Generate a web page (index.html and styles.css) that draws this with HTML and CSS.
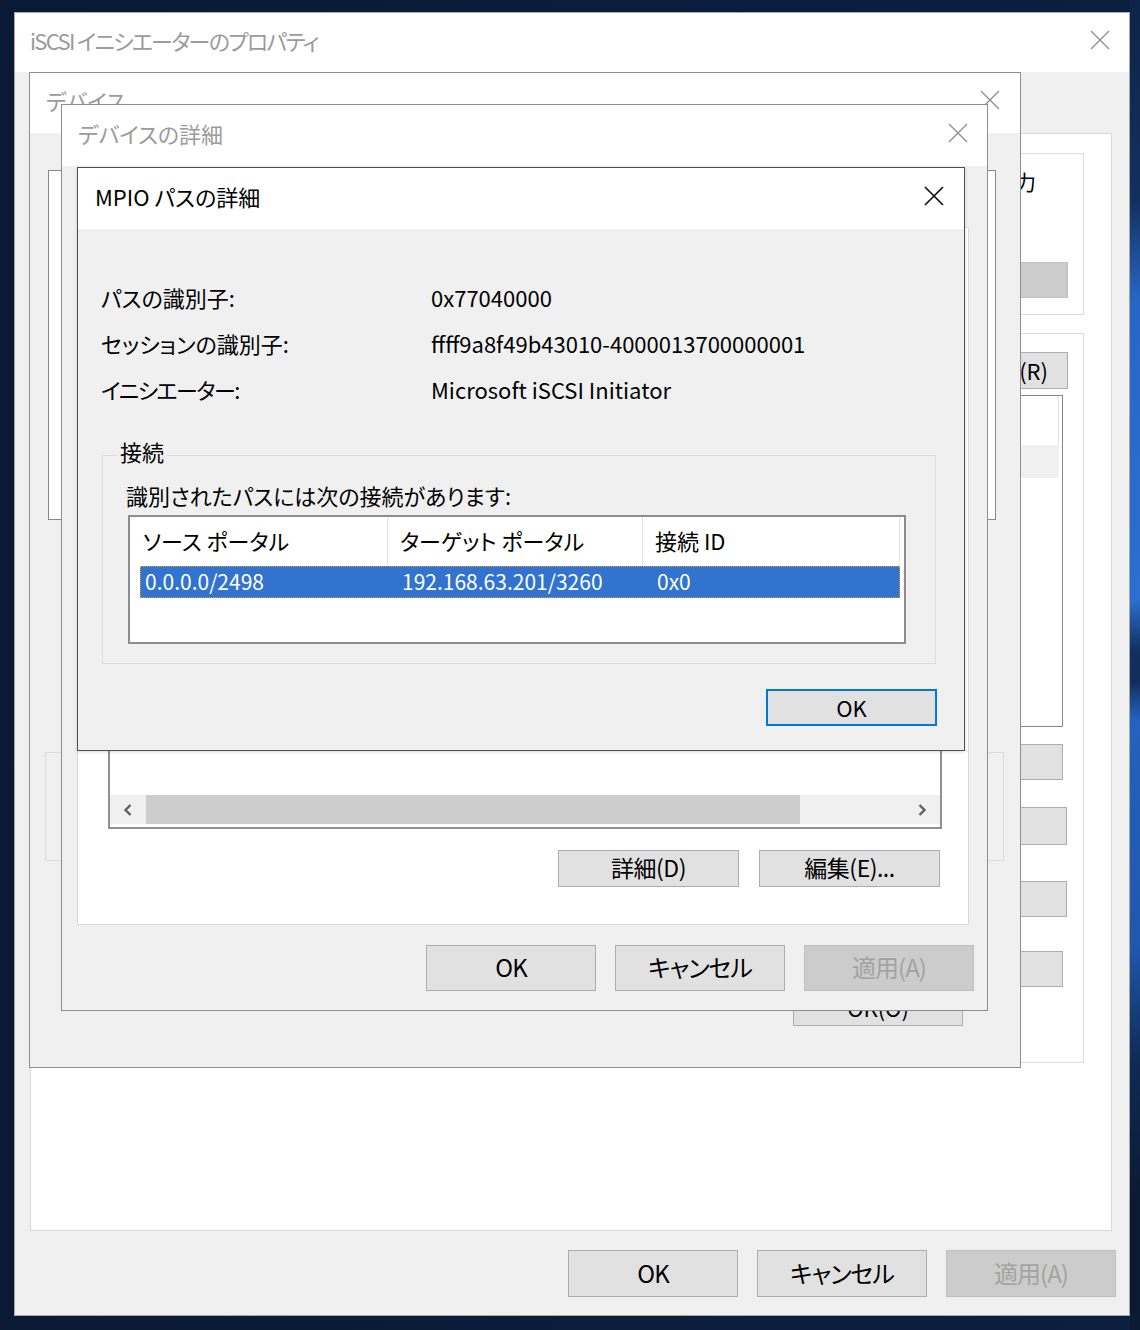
FILE: index.html
```html
<!DOCTYPE html>
<html lang="ja">
<head>
<meta charset="utf-8">
<title>MPIO パスの詳細</title>
<link rel="stylesheet" href="styles.css">
</head>
<body>
<div class="desktop">

  <section class="win w1">
    <header class="titlebar tb-inactive">
      <span class="title">iSCSI イニシエーターのプロパティ</span>
      <svg class="xicon" viewBox="0 0 20 20"><path d="M1 1L19 19M19 1L1 19"/></svg>
    </header>
    <div class="tabstrip"></div>
    <div class="tabpage w1-page">
      <div class="gb w1-gb1">
        <p class="w1-hint">ターゲットの IP アドレスまたは DNS 名を入力</p>
        <button class="btn btn-disabled w1-quick">クイック接続(Q)</button>
      </div>
      <div class="gb w1-gb2">
        <button class="btn w1-refresh">最新の情報に更新(R)</button>
        <div class="w1-list">
          <div class="w1-list-head"></div>
          <div class="w1-list-row"></div>
        </div>
        <button class="btn w1-side w1-b1"></button>
        <button class="btn w1-side w1-b2"></button>
        <button class="btn w1-side w1-b3"></button>
        <button class="btn w1-side w1-b4"></button>
      </div>
    </div>
    <div class="btnrow w1-btnrow">
      <button class="btn">OK</button>
      <button class="btn">キャンセル</button>
      <button class="btn btn-disabled">適用(A)</button>
    </div>
  </section>

  <section class="win w2">
    <header class="titlebar tb-inactive">
      <span class="title">デバイス</span>
      <svg class="xicon" viewBox="0 0 20 20"><path d="M1 1L19 19M19 1L1 19"/></svg>
    </header>
    <div class="w2-body">
      <div class="w2-list"></div>
      <div class="gb w2-gb"></div>
      <button class="btn w2-ok">OK(O)</button>
    </div>
  </section>

  <section class="win w3">
    <header class="titlebar tb-inactive">
      <span class="title">デバイスの詳細</span>
      <svg class="xicon" viewBox="0 0 20 20"><path d="M1 1L19 19M19 1L1 19"/></svg>
    </header>
    <div class="tabstrip"></div>
    <div class="tabpage w3-page">
      <div class="w3-list">
        <div class="hscroll">
          <span class="sb-btn"><svg viewBox="0 0 10 14"><path d="M7.5 2L2.5 7L7.5 12"/></svg></span>
          <span class="sb-thumb"></span>
          <span class="sb-track"></span>
          <span class="sb-btn"><svg viewBox="0 0 10 14"><path d="M2.5 2L7.5 7L2.5 12"/></svg></span>
        </div>
      </div>
      <div class="w3-btns">
        <button class="btn">詳細(D)</button>
        <button class="btn">編集(E)...</button>
      </div>
    </div>
    <div class="btnrow w3-btnrow">
      <button class="btn">OK</button>
      <button class="btn">キャンセル</button>
      <button class="btn btn-disabled">適用(A)</button>
    </div>
  </section>

  <section class="win w4">
    <header class="titlebar">
      <span class="title">MPIO パスの詳細</span>
      <svg class="xicon" viewBox="0 0 20 20"><path d="M1 1L19 19M19 1L1 19"/></svg>
    </header>
    <div class="w4-body">
      <div class="prop"><span class="prop-k">パスの識別子:</span><span class="prop-v">0x77040000</span></div>
      <div class="prop"><span class="prop-k">セッションの識別子:</span><span class="prop-v">ffff9a8f49b43010-4000013700000001</span></div>
      <div class="prop"><span class="prop-k prop-k-narrow">イニシエーター:</span><span class="prop-v">Microsoft iSCSI Initiator</span></div>
      <div class="gb w4-gb">
        <span class="gb-legend">接続</span>
        <p class="w4-note">識別されたパスには次の接続があります:</p>
        <div class="lv">
          <div class="lv-head">
            <span class="lv-h c1">ソース ポータル</span>
            <span class="lv-h c2">ターゲット ポータル</span>
            <span class="lv-h c3">接続 ID</span>
          </div>
          <div class="lv-row">
            <span class="lv-c c1">0.0.0.0/2498</span>
            <span class="lv-c c2">192.168.63.201/3260</span>
            <span class="lv-c c3">0x0</span>
          </div>
        </div>
      </div>
      <div class="w4-actions">
        <button class="btn btn-default w4-ok">OK</button>
      </div>
    </div>
  </section>

</div>
</body>
</html>
```

FILE: styles.css
```css
* { box-sizing: border-box; }
html, body { margin: 0; padding: 0; }
body {
  background: #0b1a34;
  font-family: "Noto Sans CJK JP", "Noto Sans", sans-serif;
  font-feature-settings: "palt";
  color: #000;
}
p { margin: 0; }

.desktop {
  position: relative;
  width: 1140px;
  height: 1330px;
  overflow: hidden;
  background:
    linear-gradient(to bottom, #0e2448 0px, #12305e 200px, #2866c4 300px, #2c6fd0 600px, #123060 650px, #112c58 680px, #2462bf 720px, #1f57ad 950px, #0f2a55 1060px, #0b1a33 1200px) right top / 10px 100% no-repeat,
    linear-gradient(to right, #0a1a35, #0c1f40);
}

/* ---------- windows ---------- */
.win {
  position: absolute;
  display: flex;
  flex-direction: column;
  background: #f0f0f0;
  border: 1px solid #9c9c9c;
}
.w1 { left: 14px; top: 12px; width: 1116px; height: 1304px; border-color: #a9a9a9; }
.w2 { left: 29px; top: 72px; width: 992px; height: 996px; border-color: #8e8e8e; }
.w3 { left: 61px; top: 104px; width: 927px; height: 907px; border-color: #8e8e8e; }
.w4 { left: 77px; top: 167px; width: 888px; height: 584px; border-color: #4f4f4f; box-shadow: 0 1px 3px rgba(0,0,0,0.15); }

.titlebar {
  flex: none;
  display: flex;
  align-items: center;
  justify-content: space-between;
  background: #fff;
}
.w1 .titlebar { height: 59px; padding: 0 19px 6px 15px; }
.w2 .titlebar { height: 60px; padding: 0 20px 6px 16px; }
.w3 .titlebar { height: 61px; padding: 0 19px 6px 16px; }
.w4 .titlebar { height: 61px; padding: 0 20px 5px 17px; }

.title { font-size: 22px; line-height: 30px; white-space: nowrap; }
.w1 .title { letter-spacing: -1.7px; }
.tb-inactive .title { color: #9b9b9b; }

.xicon { width: 20px; height: 20px; flex: none; fill: none; stroke: #111; stroke-width: 1.7; }
.tb-inactive .xicon { stroke: #8d8d8d; stroke-width: 1.3; }

.tabstrip { flex: none; height: 61px; }
.tabpage { flex: none; background: #fff; border: 1px solid #d9d9d9; }

/* ---------- buttons ---------- */
.btn {
  flex: none;
  display: flex;
  align-items: center;
  justify-content: center;
  margin: 0;
  padding: 0 0 2px 0;
  background: #e1e1e1;
  border: 1px solid #adadad;
  border-radius: 0;
  font-family: inherit;
  font-feature-settings: "palt";
  font-size: 23px;
  line-height: 1;
  color: #000;
  white-space: nowrap;
}
.btn-disabled { background: #cccccc; border-color: #bfbfbf; color: #a3a3a3; }
.btn-default { border: 2px solid #0078d7; }

.btnrow { flex: none; display: flex; justify-content: flex-end; gap: 19px; }
.btnrow .btn { width: 170px; height: 47px; font-size: 24px; letter-spacing: -1px; }

.gb { border: 1px solid #dcdcdc; }

/* ---------- window 1 ---------- */
.w1-page {
  margin: 0 17px 0 15px;
  height: 1098px;
  display: flex;
  flex-direction: column;
  align-items: flex-end;
  padding: 19px 27px 0 0;
}
.w1-gb1 {
  width: 1000px;
  height: 162px;
  display: flex;
  flex-direction: column;
  align-items: flex-end;
}
.w1-hint {
  margin-top: 12px;
  padding-right: 47px;
  font-size: 21px;
  line-height: 30px;
  white-space: nowrap;
}
.w1-quick {
  margin: 66px 15px 0 0;
  width: 280px;
  height: 36px;
  justify-content: flex-start;
  padding-left: 20px;
}
.w1-gb2 {
  margin-top: 18px;
  width: 1000px;
  height: 730px;
  display: flex;
  flex-direction: column;
  align-items: flex-end;
}
.w1-refresh {
  margin: 18px 15px 0 0;
  width: 200px;
  height: 37px;
  justify-content: flex-end;
  padding-right: 19px;
  font-size: 22px;
}
.w1-list {
  margin: 6px 20px 0 0;
  width: 600px;
  height: 332px;
  background: #fff;
  border: 1px solid #828790;
}
.w1-list-head { width: calc(100% - 3px); height: 49px; border-right: 1px solid #e3e3e3; }
.w1-list-row { width: calc(100% - 3px); height: 33px; background: #f0f0f0; }
.w1-side { width: 170px; }
.w1-b1 { margin: 17px 20px 0 0; height: 36px; }
.w1-b2 { margin: 27px 16px 0 0; height: 38px; }
.w1-b3 { margin: 36px 16px 0 0; height: 36px; }
.w1-b4 { margin: 34px 20px 0 0; height: 36px; }
.w1-btnrow { margin-top: 19px; padding-right: 13px; }

/* ---------- window 2 ---------- */
.w2-body { display: flex; flex-direction: column; align-items: flex-start; }
.w2-list {
  margin: 37px 0 0 18px;
  width: 948px;
  height: 350px;
  background: #fff;
  border: 1px solid #828790;
}
.w2-gb { margin: 232px 0 0 15px; width: 959px; height: 109px; }
.w2-ok { margin: 128px 0 0 763px; width: 170px; height: 37px; font-size: 22px; }

/* ---------- window 3 ---------- */
.w3-page {
  margin: 0 18px 0 15px;
  height: 698px;
  display: flex;
  flex-direction: column;
  justify-content: flex-end;
  padding-bottom: 37px;
}
.w3-list {
  margin-left: 30px;
  width: 834px;
  height: 300px;
  background: #fff;
  border: 2px solid #8e9095;
  display: flex;
  flex-direction: column;
  justify-content: flex-end;
}
.hscroll { display: flex; height: 29px; margin-bottom: 3px; }
.sb-btn {
  width: 36px;
  display: flex;
  align-items: center;
  justify-content: center;
  background: #f0f0f0;
}
.sb-btn svg { width: 10px; height: 14px; fill: none; stroke: #606060; stroke-width: 2.4; }
.sb-thumb { width: 654px; background: #cdcdcd; }
.sb-track { flex: 1; background: #f0f0f0; }
.w3-btns { display: flex; justify-content: flex-end; gap: 20px; margin-top: 21px; padding-right: 28px; }
.w3-btns .btn { width: 181px; height: 37px; font-size: 23px; letter-spacing: -0.5px; }
.w3-btnrow { margin-top: 20px; padding-right: 13px; }
.w3-btnrow .btn { height: 46px; }

/* ---------- window 4 ---------- */
.w4-body {
  flex: 1;
  display: flex;
  flex-direction: column;
  padding: 45px 0 0 23px;
}
.prop { display: flex; align-items: center; height: 46px; font-size: 22px; white-space: nowrap; }
.prop-k { width: 330px; }
.prop-k-narrow { letter-spacing: -1.5px; }

.w4-gb {
  margin: 43px 0 0 1px;
  width: 834px;
  display: flex;
  flex-direction: column;
  align-items: flex-start;
}
.gb-legend {
  margin: -19px 0 0 14px;
  padding: 0 3px;
  background: #f0f0f0;
  font-size: 22px;
  line-height: 28px;
}
.w4-note { margin: 16px 0 0 23px; font-size: 22px; line-height: 28px; white-space: nowrap; }

.lv {
  margin: 6px 0 19px 25px;
  width: 778px;
  height: 129px;
  background: #fff;
  border: 2px solid #8b8d92;
}
.lv-head { display: flex; height: 49px; }
.lv-h {
  display: flex;
  align-items: center;
  padding-left: 12px;
  padding-bottom: 3px;
  border-right: 1px solid #e5e5e5;
  font-size: 22px;
  white-space: nowrap;
}
.lv-h.c1 { width: 258px; padding-left: 13px; }
.lv-h.c2 { width: 255px; }
.lv-h.c3 { width: 257px; }
.lv-row {
  display: flex;
  margin-left: 10px;
  width: 760px;
  height: 32px;
  background: #3273d0;
  border: 1px dotted #e29a3c;
  color: #fff;
  font-size: 21px;
}
.lv-c { display: flex; align-items: center; padding-bottom: 2px; white-space: nowrap; }
.lv-row .c1 { width: 247px; padding-left: 4px; }
.lv-row .c2 { width: 255px; padding-left: 14px; }
.lv-row .c3 { width: 250px; padding-left: 14px; }

.w4-actions { display: flex; justify-content: flex-end; margin-top: 25px; padding-right: 27px; }
.w4-ok { width: 171px; height: 37px; font-size: 22px; }
```
